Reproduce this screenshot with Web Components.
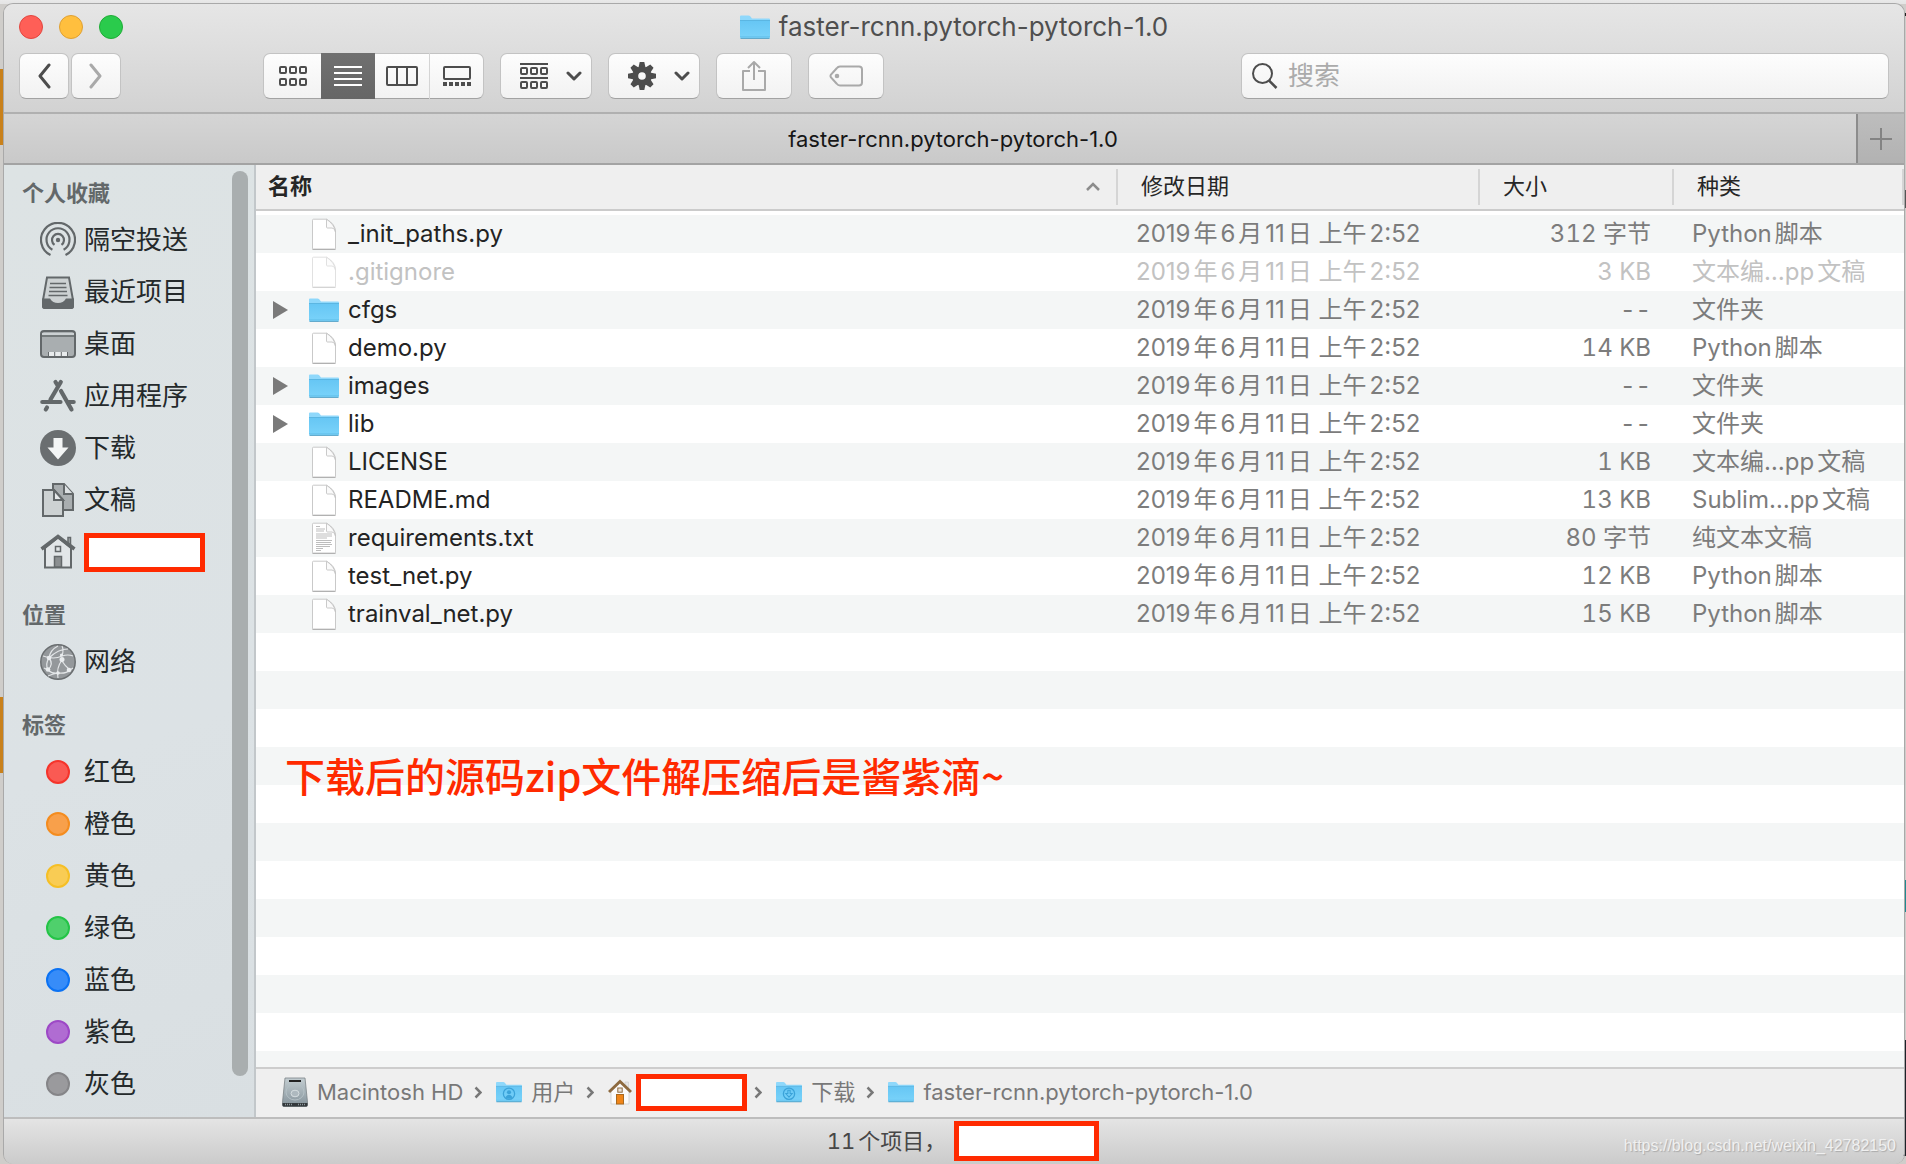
<!DOCTYPE html>
<html lang="zh-CN">
<head>
<meta charset="utf-8">
<title>faster-rcnn.pytorch-pytorch-1.0</title>
<style>
  html, body { margin: 0; height: 100%; }
  body {
    font-family: Inter, "Noto Sans CJK SC", sans-serif;
    font-size: 22px; color: #262626; overflow: hidden;
    text-autospace: normal;
    background:
      linear-gradient(#e9e9e9, #e4e4e4) 0 0 / 100% 4px no-repeat,
      linear-gradient(#0000 0 69px, #c9811b 69px 145px, #0000 145px 697px, #c9811b 697px 773px, #0000 773px) 0 0 / 4px 100% no-repeat,
      linear-gradient(#0000 0 13px, #222 13px 16px, #0000 16px 190px, #555 190px 208px, #0000 208px 880px, #1f8a8f 880px 912px, #0000 912px 1040px, #1e2229 1040px 1156px, #0000 1156px) 100% 0 / 8px 100% no-repeat,
      #cfcdca;
  }
</style>
</head>
<body>
<finder-window></finder-window>
<script>
const FOLDER = (extra = '', w = 30, h = 24) => `<svg width="${w}" height="${h}" viewBox="0 0 30 24"><defs><linearGradient id="g" x2="0" y2="1"><stop offset="0" stop-color="#66c6f4"/><stop offset="1" stop-color="#7ad3fa"/></linearGradient></defs><path d="M0 21V1.5Q0 .5 1 .5H8.500Q9.500 .5 10.200 1.300L12 3.500H29Q30 3.500 30 4.500V21Z" fill="#8fd8fb"/><path d="M0 5.500H30V22Q30 23.500 28.500 23.500H1.500Q0 23.500 0 22Z" fill="url(#g)"/><path d="M0 5.500H30" stroke="#5bb6e2" stroke-width="1"/><path d="M0 21.500H30" stroke="#62bfea" stroke-width=".6"/><path d="M.5 23.300H29.500" stroke="#4f9dc2" stroke-width="1"/>${extra}</svg>`;
const FILE = (extra = '') => `<svg width="30" height="32" viewBox="0 0 30 32"><path d="M3.500 2.200Q3.500 1.200 4.500 1.200H17.500Q26.500 6 26.500 14V30.500Q26.500 31.300 25.700 31.300H4.300Q3.500 31.300 3.500 30.500Z" fill="#fff" stroke="#c9c9c9"/><path d="M3.500 31.300H26.500" stroke="#a9a9a9"/><path d="M17.500 1.200V9Q17.500 10 18.500 10H23Q26.500 10.500 26.500 14Q25.500 6.500 17.500 1.200" fill="#fafafa" stroke="#c4c4c4" stroke-width=".9"/>${extra}</svg>`;
const sq = (x, y) => `<rect x="${x + 1}" y="${y + 1}" width="6" height="6" rx="1"/>`;
const squares = y => sq(0, y) + sq(10, y) + sq(20, y);
const ICONS = {
  folder: FOLDER(),
  minifolder: FOLDER('', 26, 22),
  users: FOLDER('<circle cx="15" cy="14" r="6.500" fill="none" stroke="#3ba3d9" stroke-width="1.500"/><circle cx="15" cy="12.300" r="2.400" fill="#3ba3d9"/><path d="M10.800 18Q15 12.500 19.200 18Q15 21.500 10.800 18" fill="#3ba3d9"/>', 26, 22),
  downfolder: FOLDER('<circle cx="15" cy="14" r="6.500" fill="none" stroke="#3ba3d9" stroke-width="1.500"/><path d="M13.700 10H16.300V13.800H18.700L15 18L11.300 13.800H13.700Z" fill="none" stroke="#3ba3d9" stroke-width="1.200"/>', 26, 22),
  file: FILE(),
  text: FILE('<path d="M7 4.500H11M7 7H16M7 9H15M7 12H23M7 14H23M7 16H18M7 18.500H23M7 20.500H22M7 22.500H23M7 24.500H21M7 26.500H14M7 28.500H12" stroke="#b5b5b5" stroke-width=".9"/>'),
  back: '<svg width="14" height="26" viewBox="0 0 14 26"><path d="M12 2L3 13L12 24" fill="none" stroke="currentColor" stroke-width="3" stroke-linecap="round" stroke-linejoin="round"/></svg>',
  forward: '<svg width="14" height="26" viewBox="0 0 14 26"><path d="M2 2L11 13L2 24" fill="none" stroke="currentColor" stroke-width="3" stroke-linecap="round" stroke-linejoin="round"/></svg>',
  grid: `<svg width="28" height="20" fill="none" stroke="currentColor" stroke-width="2">${squares(0)}${squares(12)}</svg>`,
  list: '<svg width="28" height="20" stroke="currentColor" stroke-width="2"><path d="M0 1H28M0 7H28M0 13H28M0 19H28"/></svg>',
  columns: '<svg width="32" height="20" fill="none" stroke="currentColor" stroke-width="2"><rect x="1" y="1" width="30" height="18" rx="1"/><path d="M11 1V19M21 1V19"/></svg>',
  gallery: '<svg width="28" height="20" fill="none" stroke="currentColor" stroke-width="2"><rect x="1" y="1" width="26" height="12" rx="1"/><path stroke-width="4" stroke-dasharray="4 2" d="M0 18H28"/></svg>',
  group: `<svg width="28" height="26" fill="none" stroke="currentColor" stroke-width="2"><path d="M0 1H28M0 15H28"/>${squares(4)}${squares(18)}</svg>`,
  chevron: '<svg width="16" height="10" fill="none" stroke="currentColor" stroke-width="3" stroke-linecap="round" stroke-linejoin="round"><path d="M2 2L8 8L14 2"/></svg>',
  gear: `<svg width="28" height="28" viewBox="-14 -14 28 28"><g fill="currentColor">${[0, 45, 90, 135, 180, 225, 270, 315].map(a => `<path transform="rotate(${a})" d="M-3.600 -8L-2.300 -14H2.300L3.600 -8Z"/>`).join('')}</g><circle r="6.700" fill="none" stroke="currentColor" stroke-width="5.800"/></svg>`,
  share: '<svg width="24" height="32" fill="none" stroke="currentColor" stroke-width="2"><path d="M8 11H1V30H23V11H16M12 20V2M6 8L12 2L18 8" stroke-linejoin="round"/></svg>',
  tag: '<svg width="34" height="22" fill="none" stroke="currentColor" stroke-width="2"><path d="M11 1.500H30Q33 1.500 33 4.500V17.500Q33 20.500 30 20.500H11Q9 20.500 7.500 18.500L2 12.500Q1 11 2 9.500L7.500 3.500Q9 1.500 11 1.500Z"/><circle cx="8" cy="11" r="1.300" fill="currentColor"/></svg>',
  search: '<svg width="26" height="26" fill="none" stroke="currentColor" stroke-width="2"><circle cx="10.500" cy="10.500" r="9.500"/><path d="M17 17.500L24.500 25" stroke-width="2.500"/></svg>',
  plus: '<svg width="22" height="22" stroke="currentColor" stroke-width="2"><path d="M0 11H22M11 0V22"/></svg>',
  sort: '<svg width="14" height="9" fill="none" stroke="currentColor" stroke-width="2.500"><path d="M1 8L7 2L13 8"/></svg>',
  triangle: '<svg width="15" height="18"><path d="M0 0L15 9L0 18Z" fill="currentColor"/></svg>',
  step: '<svg width="8" height="13" fill="none" stroke="currentColor" stroke-width="2.500"><path d="M1.500 1.500L6.500 6.500L1.500 11.500"/></svg>',
  airdrop: '<svg width="36" height="36" viewBox="-18 -18 36 36" fill="none" stroke="currentColor" stroke-width="2.200"><circle r="2.200" fill="currentColor" stroke="none"/><path d="M-3.500 4.800A6 6 0 1 1 3.500 4.800"/><path d="M-5.600 9.800A11.500 11.500 0 1 1 5.600 9.800"/><path d="M-7.500 15.100A17 17 0 1 1 7.500 15.100"/></svg>',
  recent: '<svg width="36" height="36" fill="none" stroke="currentColor" stroke-width="2"><path d="M7 3.500H29L33 26V32Q33 34 31 34H5Q3 34 3 32V26Z" fill="#cdd2d3"/><path d="M10 9.500H26M9.500 13.500H26.500M9 17.500H27M8.500 21.500H27.500" stroke-width="1.700"/><path d="M3 25.500H9.500Q12 30 18 30Q24 30 26.500 25.500H33V32Q33 34 31 34H5Q3 34 3 32Z" fill="currentColor"/></svg>',
  desktop: '<svg width="36" height="36" fill="none" stroke="currentColor" stroke-width="2"><rect x="1" y="5" width="34" height="26" rx="3" fill="#a9aeb0"/><path d="M2 7H34V9H2Z" fill="#ccd1d3" stroke="none"/><path d="M1 10H35" stroke-width="1.500"/><path d="M8 26H28V30H8Z" fill="#e9eced" stroke="none"/><path d="M8.500 30V26M14.700 30V26M21.300 30V26M27.500 30V26" stroke-width="1"/></svg>',
  apps: '<svg width="36" height="36" fill="none" stroke="currentColor" stroke-width="4.200" stroke-linecap="round"><path d="M20.800 4L10.500 21.500M7 29.500L5.800 31.500M2.300 24H20.500M15.500 4L18 8M21 13L31.500 31.500M28 24H33.700"/></svg>',
  down: '<svg width="36" height="36"><circle cx="18" cy="18" r="18" fill="#6a6e70"/><path d="M13.500 8H22.500V17.500H28.500L18 29.500L7.500 17.500H13.500Z" fill="#f3f5f5"/></svg>',
  docs: '<svg width="36" height="36" fill="none" stroke="currentColor" stroke-width="2"><path d="M13 2H24L33 12V28H13Z" fill="#a9aeb0"/><path d="M24 2V12H33" fill="#dde1e3"/><path d="M3 8H14L23 18V34H3Z" fill="#cdd2d3"/><path d="M14 8V18H23Z" fill="#e6e9ea"/></svg>',
  home: '<svg width="36" height="36" fill="none" stroke="currentColor" stroke-width="2"><path d="M28 10V3.500H30.500V13" fill="#a9aeb0" stroke-width="1.500"/><path d="M5 14V33.500H31V14L18 3.500Z" fill="#e2e6e8"/><path d="M1.500 15L18 2.500L34.500 15" stroke-width="3.500"/><rect x="15.500" y="12.500" width="5" height="5" stroke-width="1.500"/><path d="M14.500 33V22.500H21.500V33Z" fill="#8b8f91" stroke-width="1.500"/></svg>',
  network: '<svg width="36" height="36"><circle cx="18" cy="18" r="17.200" fill="#94989b" stroke="#6a6e70" stroke-width="1.500"/><g fill="none" stroke="#e3e6e8" stroke-width="1.200"><path d="M3 12Q14 16 22 12Q28 10 33 12M9 14Q10 6 18 2M9 14Q5 20 8 26Q12 30 18 29Q26 30 30 26M22 12Q24 6 22 2M22 16Q16 24 18 34M22 17Q25 22 30 26M9 14Q14 20 8 26M8 26L4 24M18 29Q12 30 8 32M30 26L33 24M9 14Q18 5 28 5"/></g><g fill="#e9ecee"><circle cx="9" cy="14" r="2.300"/><circle cx="22" cy="15.500" r="2.500"/><circle cx="8" cy="25.500" r="2.300"/><circle cx="18" cy="29" r="1.800"/><circle cx="29" cy="26" r="2.300"/><circle cx="21.500" cy="11" r="1.600"/></g></svg>',
  disk: '<svg width="26" height="30"><defs><linearGradient id="d" x2="0" y2="1"><stop offset="0" stop-color="#c3cdd1"/><stop offset="1" stop-color="#84929a"/></linearGradient></defs><path d="M3 1H23L25.500 25V28Q25.500 29.500 24 29.500H2Q.5 29.500 .5 28V25Z" fill="url(#d)" stroke="#7c8488" stroke-width=".8"/><path d="M7 4H19" stroke="#222" stroke-width="2"/><ellipse cx="13" cy="15" rx="9" ry="8" fill="none" stroke="#b4c0c5" stroke-width="1"/><ellipse cx="13" cy="16.500" rx="4" ry="3.300" fill="#aeb9bf" stroke="#d5dde0"/><path d="M.5 26H25.500V28Q25.500 29.500 24 29.500H2Q.5 29.500 .5 28Z" fill="#33383b"/><path d="M3 27.500H10M16 27.500H23" stroke="#8e989d" stroke-width="1.500" stroke-dasharray="1 1"/></svg>',
  house: '<svg width="24" height="26"><path d="M17 3H20.500V9H17Z" fill="#e4e4e4" stroke="#c9c9c9" stroke-width=".6"/><path d="M3 11L12 3L21 11V25H3Z" fill="#fbfbfb" stroke="#cfcfcf" stroke-width=".8"/><path d="M1 13L12 2.500L23 13" fill="none" stroke="#8d6a3f" stroke-width="3"/><rect x="9.800" y="9" width="4.400" height="4.200" fill="#e9e2d8" stroke="#8d6a3f"/><rect x="8.500" y="15.500" width="7" height="9.500" fill="#f08519" stroke="#a8691f"/></svg>'
};

/* Registers an element whose shadow root is cloned from a template. */
function define(name, css, html, setup) {
  const tpl = document.createElement('template');
  tpl.innerHTML = `<style>*,*::before{box-sizing:border-box}${css}</style>${html}`;
  customElements.define(name, class extends HTMLElement {
    connectedCallback() {
      if (this.shadowRoot) return;
      this.attachShadow({ mode: 'open' }).append(tpl.content.cloneNode(true));
      if (setup) setup(this, this.shadowRoot);
    }
  });
}

define('f-icon', ':host{display:inline-flex;flex:none}svg{display:block}', '<span></span>',
  (el, root) => { root.querySelector('span').innerHTML = ICONS[el.getAttribute('name')]; });

define('redacted-box', ':host{display:block;flex:none;background:#fff;border:5px solid #ff2a00}', '');

define('tool-button', `
  :host{display:block;flex:none}
  button{font:inherit;color:#4d4d4d;display:flex;align-items:center;justify-content:center;gap:18px;width:50px;height:46px;padding:0;
    border:1px solid #c3c3c3;border-bottom-color:#a2a2a2;border-radius:7px;background:linear-gradient(#fdfdfd,#f2f2f2)}
  :host([menu]) button{width:92px;padding-left:10px}
  :host([wide]) button{width:76px}
  button:disabled{color:#a9a9a9}`,
  '<button type="button"><slot></slot></button>',
  (el, root) => {
    const b = root.querySelector('button');
    b.setAttribute('aria-label', el.getAttribute('label'));
    b.disabled = el.hasAttribute('off');
  });

define('view-switch', `
  :host{display:flex;flex:none;height:46px;border:1px solid #c3c3c3;border-bottom-color:#a2a2a2;border-radius:7px;background:linear-gradient(#fdfdfd,#f2f2f2)}
  button{width:54px;margin:-1px 0;padding:0;border:0;background:none;color:#4d4d4d;display:flex;align-items:center;justify-content:center}
  button:first-of-type{width:57px}
  button:last-of-type{border-left:1px solid #d4d4d4}
  button[aria-pressed=true]{background:linear-gradient(#707070,#666);color:#fff}`,
  `<button aria-label="图标"><f-icon name="grid"></f-icon></button>
   <button aria-label="列表" aria-pressed="true"><f-icon name="list"></f-icon></button>
   <button aria-label="分栏"><f-icon name="columns"></f-icon></button>
   <button aria-label="画廊"><f-icon name="gallery"></f-icon></button>`);

define('search-field', `
  :host{display:block;flex:0 1 648px}
  label{display:flex;align-items:center;gap:10px;height:46px;padding:0 10px;color:#4d4d4d;border:1px solid #c3c3c3;border-bottom-color:#a2a2a2;border-radius:7px;background:linear-gradient(#fdfdfd,#f2f2f2)}
  input{flex:1;min-width:0;border:0;outline:0;background:none;font:inherit;font-size:26px;line-height:36px;padding:0;color:#262626}
  input::placeholder{color:#ababab}`,
  '<label><f-icon name="search"></f-icon><input type="search" placeholder="搜索" aria-label="搜索"></label>');

define('window-toolbar', `
  :host{display:flex;flex-direction:column;gap:4px;height:110px;padding:0 15px;background:linear-gradient(#e6e6e6,#d2d2d2);border-bottom:2px solid #b0b0b0}
  .title{display:grid;grid-template-columns:1fr auto 1fr;align-items:center;height:45px}
  .lights{display:flex;gap:16px}
  .lights button{width:24px;height:24px;padding:0;border-radius:50%;border:1px solid var(--edge)}
  .r{background:#ff5f57;--edge:#e2463f}.y{background:#ffbf3e;--edge:#dfa033}.g{background:#2acb4c;--edge:#1fac36}
  h1{display:flex;align-items:center;gap:9px;margin:0;font-size:26px;line-height:36px;font-weight:400;color:#4f4f4f}
  .tools{display:flex;align-items:center}
  .nav{display:flex;gap:2px;margin-right:142px}
  .groups{display:flex;gap:16px}
  search-field{margin-left:auto}`,
  `<div class="title"><div class="lights"><button class="r" aria-label="关闭"></button><button class="y" aria-label="最小化"></button><button class="g" aria-label="缩放"></button></div>
   <h1><f-icon name="folder"></f-icon><span>faster-rcnn.pytorch-pytorch-1.0</span></h1></div>
   <div class="tools">
     <div class="nav"><tool-button label="后退"><f-icon name="back"></f-icon></tool-button><tool-button label="前进" off><f-icon name="forward"></f-icon></tool-button></div>
     <div class="groups"><view-switch></view-switch>
     <tool-button label="分组" menu><f-icon name="group"></f-icon><f-icon name="chevron"></f-icon></tool-button>
     <tool-button label="操作" menu><f-icon name="gear"></f-icon><f-icon name="chevron"></f-icon></tool-button>
     <tool-button label="共享" off wide><f-icon name="share"></f-icon></tool-button>
     <tool-button label="标签" off wide><f-icon name="tag"></f-icon></tool-button></div>
     <search-field></search-field>
   </div>`);

define('tab-strip', `
  :host{display:flex;height:51px;border-bottom:2px solid #a3a3a3;background:linear-gradient(#d5d5d5,#c9c9c9)}
  button{font:inherit;border:0;padding:0;background:none;color:#161616}
  .tab{flex:1;padding-left:46px;line-height:48px}
  .add{width:48px;display:flex;align-items:center;justify-content:center;border-left:2px solid #8c8c8c;background:linear-gradient(#bdbdbd,#b2b2b2);color:#838383}`,
  `<button class="tab">faster-rcnn.pytorch-pytorch-1.0</button><button class="add" aria-label="新标签页"><f-icon name="plus"></f-icon></button>`);

define('side-section', `
  :host{display:block}
  :host(:not(:first-of-type)){padding-top:16px}
  h2{margin:0;padding-left:18px;font-size:22px;line-height:42px;font-weight:600;color:#63686a}`,
  '<h2></h2><slot></slot>', (el, root) => { root.querySelector('h2').textContent = el.getAttribute('heading'); });

define('side-item', `
  :host{display:block}
  a{display:flex;align-items:center;gap:8px;height:52px;padding-left:36px;font-size:26px;line-height:36px;color:#24292b;text-decoration:none}
  f-icon{color:#63686a}
  .dot{width:24px;height:24px;margin:0 6px;border-radius:50%;border:2px solid}`,
  '<a href="#"><slot></slot></a>', (el, root) => {
    const a = root.querySelector('a');
    if (el.hasAttribute('icon')) a.insertAdjacentHTML('afterbegin', `<f-icon name="${el.getAttribute('icon')}"></f-icon>`);
    else {
      const [fill, edge] = el.getAttribute('dot').split(' ');
      a.insertAdjacentHTML('afterbegin', `<span class="dot" style="background:${fill};border-color:${edge}"></span>`);
    }
  });

define('side-bar', `
  :host{display:flex;width:252px;flex:none;border-right:2px solid #c2c7ca;background:linear-gradient(160deg,#dde3e4,#dce2e5 60%,#d9dfe2)}
  nav{flex:1;padding-top:7px}
  .scroll{width:16px;margin:6px 6px 41px 0;border-radius:8px;background:#a9aeaf}
  redacted-box{width:121px;height:39px}`,
  `<nav>
    <side-section heading="个人收藏">
      <side-item icon="airdrop">隔空投送</side-item><side-item icon="recent">最近项目</side-item>
      <side-item icon="desktop">桌面</side-item><side-item icon="apps">应用程序</side-item>
      <side-item icon="down">下载</side-item><side-item icon="docs">文稿</side-item>
      <side-item icon="home"><redacted-box></redacted-box></side-item>
    </side-section>
    <side-section heading="位置"><side-item icon="network">网络</side-item></side-section>
    <side-section heading="标签">
      <side-item dot="#fa5a53 #f5342b">红色</side-item><side-item dot="#f8a04b #f48c1f">橙色</side-item>
      <side-item dot="#f9cc54 #f5bf26">黄色</side-item><side-item dot="#4fd06c #24c447">绿色</side-item>
      <side-item dot="#378cf8 #0b72f3">蓝色</side-item><side-item dot="#b06cd2 #9d48c6">紫色</side-item>
      <side-item dot="#9a9a9d #858588">灰色</side-item>
    </side-section>
  </nav><div class="scroll"></div>`);

const FILES = [
  ['_init_paths.py', 'file', '312 字节', 'Python脚本'],
  ['.gitignore', 'file', '3 KB', '文本编…pp文稿'],
  ['cfgs', 'folder', '--', '文件夹'],
  ['demo.py', 'file', '14 KB', 'Python脚本'],
  ['images', 'folder', '--', '文件夹'],
  ['lib', 'folder', '--', '文件夹'],
  ['LICENSE', 'file', '1 KB', '文本编…pp文稿'],
  ['README.md', 'file', '13 KB', 'Sublim…pp文稿'],
  ['requirements.txt', 'text', '80 字节', '纯文本文稿'],
  ['test_net.py', 'file', '12 KB', 'Python脚本'],
  ['trainval_net.py', 'file', '15 KB', 'Python脚本']
];

define('file-list', `
  :host{display:block;flex:1;min-height:0;position:relative;overflow:hidden;background:repeating-linear-gradient(#f4f6f6 0 38px,#fff 38px 76px) 0 50px / 100% 912px}
  table{width:100%;border-spacing:0;table-layout:fixed}
  th{height:50px;padding:0 0 8px 23px;text-align:left;font-size:22px;line-height:32px;font-weight:400;color:#262626;
     background:linear-gradient(#d5d5d5,#d5d5d5) 100% 4px / 2px 36px no-repeat,linear-gradient(#efefef 0 44px,#cbcbcb 44px 46px,#fff 46px)}
  th:first-child{padding-left:12px;font-weight:600}
  th div{display:flex;align-items:center;justify-content:space-between;padding-right:18px}
  th f-icon{color:#8c8c8c}
  td{height:38px;padding:0 0 0 18px;font-size:24px;line-height:34px;color:#7c7c7c;white-space:nowrap}
  td:first-child{padding-left:17px;color:#232323}
  .name{display:flex;align-items:center}
  .name button{width:36px;height:18px;padding:0;border:0;background:none;color:#7a7a7a;display:flex;flex:none}
  .name f-icon{margin-right:9px}
  .file{padding-left:36px}
  td.size{text-align:right;padding:0 23px 0 0;font-variant-numeric:tabular-nums}
  .dim td,.dim td:first-child{color:#c2c2c2}.dim f-icon{opacity:.55}
  ::slotted(*){position:absolute;left:29px;top:580px}`,
  `<table><colgroup><col><col style="width:362px"><col style="width:194px"><col style="width:230px"></colgroup>
   <thead><tr><th><div>名称<f-icon name="sort"></f-icon></div></th><th>修改日期</th><th>大小</th><th>种类</th></tr></thead><tbody></tbody></table><slot></slot>`,
  (el, root) => {
    root.querySelector('tbody').innerHTML = FILES.map(([n, icon, size, kind]) => `<tr${n[0] === '.' ? ' class="dim"' : ''}>
      <td><div class="name${icon === 'folder' ? '' : ' file'}">${icon === 'folder' ? '<button aria-label="展开"><f-icon name="triangle"></f-icon></button>' : ''}<f-icon name="${icon}"></f-icon><span>${n}</span></div></td>
      <td>2019年6月11日 上午2:52</td><td class="size">${size}</td><td>${kind}</td></tr>`).join('');
  });

define('red-note', ':host{display:block;font:500 40px/60px "Noto Sans CJK SC",sans-serif;text-autospace:no-autospace;color:#ff2a00;white-space:nowrap}', '<slot></slot>');

define('path-bar', `
  :host{display:flex;align-items:center;height:50px;padding:0 0 2px 26px;background:#efefef;border-top:2px solid #cdcdcd;color:#787878}
  a{display:flex;align-items:center;gap:9px;line-height:32px;color:inherit;text-decoration:none}
  .home{gap:4px;margin-right:-4px}
  .step{margin:0 14px 0 11px}
  redacted-box{width:111px;height:37px}`,
  `<a href="#"><f-icon name="disk"></f-icon>Macintosh HD</a><f-icon class="step" name="step"></f-icon>
   <a href="#"><f-icon name="users"></f-icon>用户</a><f-icon class="step" name="step"></f-icon>
   <a href="#" class="home"><f-icon name="house"></f-icon><redacted-box></redacted-box></a><f-icon class="step" name="step"></f-icon>
   <a href="#"><f-icon name="downfolder"></f-icon>下载</a><f-icon class="step" name="step"></f-icon>
   <a href="#"><f-icon name="minifolder"></f-icon>faster-rcnn.pytorch-pytorch-1.0</a>`);

define('status-bar', `
  :host{display:grid;grid-template-columns:1fr auto 1fr;align-items:center;height:47px;padding:0 8px 2px 26px;background:linear-gradient(#e4e4e4,#cbcbcb);border-top:2px solid #bdbdbd}
  .count{grid-column:2;display:flex;align-items:center;gap:8px;line-height:32px;color:#474747;font-variant-numeric:tabular-nums}
  redacted-box{width:145px;height:40px}
  .mark{justify-self:end;align-self:end;font:16px/18px "Liberation Sans",sans-serif;margin-bottom:7px;color:#f0f0f0;text-shadow:1px 1px 1px #aaa}`,
  '<div class="count"><span>11个项目，</span><redacted-box></redacted-box></div><span class="mark">https://blog.csdn.net/weixin_42782150</span>');

define('finder-window', `
  :host{display:flex;flex-direction:column;height:100vh;padding:3px 1px 0 3px;box-sizing:border-box}
  .win{flex:1;min-height:0;display:flex;flex-direction:column;overflow:hidden;border:1px solid #a9a9a9;border-bottom:0;border-radius:10px}
  .body{flex:1;min-height:0;display:flex}
  main{flex:1;min-width:0;display:flex;flex-direction:column}`,
  `<div class="win"><window-toolbar></window-toolbar><tab-strip></tab-strip>
   <div class="body"><side-bar></side-bar><main><file-list><red-note>下载后的源码zip文件解压缩后是酱紫滴~</red-note></file-list><path-bar></path-bar></main></div>
   <status-bar></status-bar></div>`);
</script>
</body>
</html>
